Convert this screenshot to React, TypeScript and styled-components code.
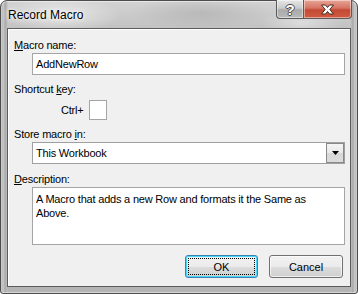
import React from "react";
import styled, { createGlobalStyle } from "styled-components";

const GlobalStyle = createGlobalStyle`
  html, body { margin: 0; padding: 0; background: #ffffff; }
  body { font-family: "Liberation Sans", Arial, sans-serif; }
`;

const Window = styled.div`
  width: 358px;
  height: 294px;
  box-sizing: border-box;
  display: flex;
  flex-direction: column;
  padding: 0 6px 6px;
  border: 1px solid #4d4d4d;
  border-radius: 7px 7px 3px 3px;
  background:
    radial-gradient(ellipse 60px 18px at 60px 14px, rgba(255, 255, 255, 0.55), transparent),
    radial-gradient(ellipse 70px 16px at 200px 12px, rgba(150, 150, 150, 0.35), transparent),
    radial-gradient(ellipse 40px 14px at 300px 22px, rgba(255, 255, 255, 0.4), transparent),
    linear-gradient(to right, #8e8e8e 0, #cfcfcf 2px, #a9a9a9 4px, #bdbdbd 6px, transparent 7px,
      transparent calc(100% - 7px), #bdbdbd calc(100% - 6px), #a9a9a9 calc(100% - 4px),
      #cfcfcf calc(100% - 2px), #8e8e8e 100%),
    linear-gradient(to bottom, #d3d3d3 0, #c2c2c2 28px, #b4b4b4 100%);
  box-shadow: inset 0 0 0 1px rgba(255, 255, 255, 0.45);
`;

const TitleBar = styled.div`
  height: 27px;
  display: flex;
  align-items: flex-start;
  justify-content: space-between;
`;

const TitleText = styled.div`
  padding: 7px 0 0 1px;
  font-size: 12px;
  line-height: 15px;
  color: #000;
  text-shadow: 0 0 6px rgba(255, 255, 255, 0.95), 0 0 3px rgba(255, 255, 255, 0.9);
`;

const Captions = styled.div`
  display: flex;
  margin: -1px -1px 0 0;
`;

const CaptionButton = styled.div<{ $close?: boolean }>`
  width: ${(p) => (p.$close ? 48 : 28)}px;
  height: 19px;
  box-sizing: border-box;
  display: flex;
  align-items: center;
  justify-content: center;
  border: 1px solid #5a5a5a;
  border-top: none;
  border-left: ${(p) => (p.$close ? "none" : "1px solid #5a5a5a")};
  border-radius: ${(p) => (p.$close ? "0 0 4px 0" : "0 0 0 4px")};
  box-shadow: inset 0 0 0 1px rgba(255, 255, 255, 0.45);
  background: ${(p) =>
    p.$close
      ? "linear-gradient(to bottom, #e8a597 0, #d67462 45%, #c34a34 55%, #cf5b41 100%)"
      : "linear-gradient(to bottom, #e6e6e6 0, #cbcbcb 45%, #aaaaaa 55%, #b9b9b9 100%)"};
`;

const HelpGlyph = styled.span`
  font-family: "Liberation Sans", Arial, sans-serif;
  font-weight: bold;
  font-size: 15px;
  line-height: 15px;
  color: #ffffff;
  text-shadow: -1px 0 #4b4b4b, 1px 0 #4b4b4b, 0 -1px #4b4b4b, 0 1px #4b4b4b;
`;

const Client = styled.div`
  flex: 1;
  border: 1px solid #5c5c5c;
  background: #f0f0f0;
  box-shadow: inset 1px 1px 0 #ffffff;
  padding: 9px 5px 0 6px;
  display: flex;
  flex-direction: column;
  font-size: 11px;
  letter-spacing: -0.2px;
  color: #000;
`;

const Label = styled.div<{ $top?: number }>`
  line-height: 14px;
  margin-top: ${(p) => p.$top ?? 0}px;
  margin-bottom: 1px;
`;

const Key = styled.span`
  text-decoration: underline;
  text-underline-offset: 1px;
`;

const TextBox = styled.div<{ $height?: number }>`
  margin-left: 18px;
  height: ${(p) => p.$height ?? 22}px;
  box-sizing: border-box;
  border: 1px solid #a5a5a5;
  background: #ffffff;
  padding: 0 3px;
  display: flex;
  align-items: ${(p) => (p.$height ? "flex-start" : "center")};
  line-height: 14px;
  padding-top: ${(p) => (p.$height ? 4 : 0)}px;
  color: #000;
`;

const ShortcutRow = styled.div`
  margin: 3px 0 0 47px;
  display: flex;
  align-items: center;
  gap: 5px;
`;

const KeyBox = styled.div`
  width: 18px;
  height: 20px;
  box-sizing: border-box;
  border: 1px solid #a5a5a5;
  background: #ffffff;
`;

const Combo = styled.div`
  margin-left: 18px;
  height: 22px;
  box-sizing: border-box;
  border: 1px solid #a0a0a0;
  background: #ffffff;
  display: flex;
  align-items: center;
  padding: 0 0 0 3px;
`;

const ComboText = styled.div`
  flex: 1;
`;

const ComboArrow = styled.div`
  width: 18px;
  height: 20px;
  box-sizing: border-box;
  border: 1px solid #8a8a8a;
  background: linear-gradient(to bottom, #f5f5f5 0, #e9e9e9 50%, #d8d8d8 51%, #dcdcdc 100%);
  display: flex;
  align-items: center;
  justify-content: center;
`;

const ButtonRow = styled.div`
  display: flex;
  justify-content: flex-end;
  gap: 11px;
  margin: 10px 2px 0 0;
`;

const Button = styled.div<{ $default?: boolean; $width: number }>`
  width: ${(p) => p.$width}px;
  height: 23px;
  box-sizing: border-box;
  border: 1px solid ${(p) => (p.$default ? "#3c7fb1" : "#707070")};
  border-radius: 3px;
  background: linear-gradient(to bottom, #f2f2f2 0, #ebebeb 50%, #dddddd 51%, #cfcfcf 100%);
  box-shadow: inset 0 0 0 1px ${(p) => (p.$default ? "#48d7fb" : "rgba(255,255,255,0.7)")};
  display: flex;
  align-items: center;
  justify-content: center;
  padding: 2px;
  letter-spacing: 0;
`;

const Focus = styled.div`
  flex: 1;
  align-self: stretch;
  border: 1px dotted #000;
  display: flex;
  align-items: center;
  justify-content: center;
`;

export default function App() {
  return (
    <>
      <GlobalStyle />
      <Window>
        <TitleBar>
          <TitleText>Record Macro</TitleText>
          <Captions>
            <CaptionButton>
              <HelpGlyph>?</HelpGlyph>
            </CaptionButton>
            <CaptionButton $close>
              <svg width="15" height="11" viewBox="0 0 15 11">
                <path
                  d="M1.5 1 H5.5 L7.5 3.5 L9.5 1 H13.5 L9.8 5.5 L13.5 10 H9.5 L7.5 7.5 L5.5 10 H1.5 L5.2 5.5 Z"
                  fill="#ffffff"
                  stroke="#4a2a22"
                  strokeWidth="1"
                  strokeLinejoin="round"
                />
              </svg>
            </CaptionButton>
          </Captions>
        </TitleBar>
        <Client>
          <Label>
            <Key>M</Key>acro name:
          </Label>
          <TextBox>AddNewRow</TextBox>
          <Label $top={7}>
            Shortcut <Key>k</Key>ey:
          </Label>
          <ShortcutRow>
            <span>Ctrl+</span>
            <KeyBox />
          </ShortcutRow>
          <Label $top={7}>
            Store macro <Key>i</Key>n:
          </Label>
          <Combo>
            <ComboText>This Workbook</ComboText>
            <ComboArrow>
              <svg width="7" height="4" viewBox="0 0 7 4">
                <path d="M0 0 H7 L3.5 4 Z" fill="#000000" />
              </svg>
            </ComboArrow>
          </Combo>
          <Label $top={8}>
            <Key>D</Key>escription:
          </Label>
          <TextBox $height={58}>
            A Macro that adds a new Row and formats it the Same as Above.
          </TextBox>
          <ButtonRow>
            <Button $default $width={73}>
              <Focus>OK</Focus>
            </Button>
            <Button $width={74}>Cancel</Button>
          </ButtonRow>
        </Client>
      </Window>
    </>
  );
}
